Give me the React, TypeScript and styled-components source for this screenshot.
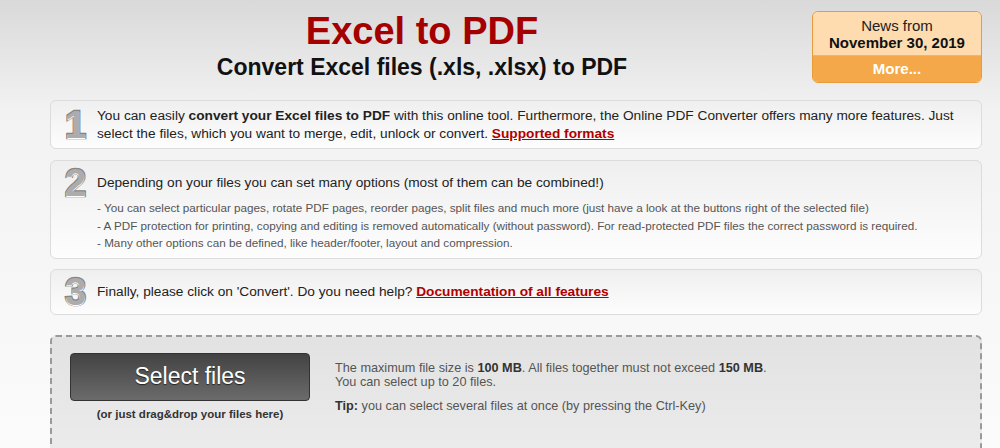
import styled, { createGlobalStyle } from "styled-components";

const GlobalStyle = createGlobalStyle`
  html, body {
    margin: 0;
    padding: 0;
  }
  body {
    font-family: "Liberation Sans", Arial, sans-serif;
    color: #222;
    background: linear-gradient(to bottom, #d9d9d9 0px, #f2f2f2 110px, #fbfbfb 448px);
    min-height: 448px;
    overflow: hidden;
  }
`;

const Page = styled.div`
  padding: 0 18px 0 50px;
`;

const Header = styled.header`
  display: flex;
  align-items: flex-start;
  gap: 18px;
  height: 100px;
  box-sizing: border-box;
  padding-top: 9px;
`;

const TitleBlock = styled.div`
  flex: 1;
  text-align: center;
`;

const Title = styled.h1`
  margin: 0;
  font-size: 38px;
  line-height: 44px;
  font-weight: bold;
  color: #a50000;
`;

const Subtitle = styled.h2`
  margin: 0;
  font-size: 23px;
  line-height: 28px;
  font-weight: bold;
  color: #111;
`;

const News = styled.div`
  width: 170px;
  margin-top: 2px;
  box-sizing: border-box;
  border: 1px solid #e99a3a;
  border-radius: 6px;
  overflow: hidden;
  text-align: center;
  font-size: 15px;
`;

const NewsTop = styled.div`
  background: #fedcb0;
  padding: 5px 0 4px;
  line-height: 17px;
  color: #222;
  b {
    color: #111;
  }
`;

const NewsMore = styled.div`
  background: #f4a84a;
  color: #fff;
  font-weight: bold;
  line-height: 26px;
  border-top: 1px solid #f0b370;
`;

const Step = styled.section<{ $gap?: number }>`
  display: flex;
  align-items: flex-start;
  padding: 6px 14px;
  margin-bottom: ${(p) => p.$gap ?? 10}px;
  border: 1px solid #dcdcdc;
  border-radius: 6px;
  background: linear-gradient(to bottom, #efefef, #fdfdfd);
`;

const Digit = styled.div<{ $center?: boolean }>`
  flex: 0 0 32px;
  height: 32px;
  align-self: ${(p) => (p.$center ? "center" : "flex-start")};
  font-family: "Liberation Sans", Arial, sans-serif;
  font-weight: bold;
  font-size: 38px;
  line-height: 32px;
  color: #acacac;
  -webkit-text-stroke: 2.5px #868686;
  paint-order: stroke fill;
  text-shadow: 0 1px 0 #fff;
`;

const StepBody = styled.div`
  flex: 1;
  font-size: 13.7px;
`;

const Para = styled.p<{ $single?: boolean }>`
  margin: 0;
  line-height: ${(p) => (p.$single ? "32px" : "17.5px")};
`;

const SubList = styled.div`
  font-size: 11.7px;
  line-height: 17.5px;
  color: #555;
`;

const Link = styled.a`
  color: #b00000;
  font-weight: bold;
  text-decoration: underline;
`;

const DropZone = styled.div`
  margin-top: 20px;
  display: flex;
  align-items: flex-start;
  gap: 25px;
  padding: 16px 18px 40px;
  border: 2px dashed #9a9a9a;
  border-radius: 6px;
  background: linear-gradient(to bottom, #e2e2e2, #ececec);
`;

const PickColumn = styled.div`
  width: 240px;
  text-align: center;
`;

const SelectButton = styled.button`
  width: 240px;
  height: 48px;
  border: 1px solid #333;
  border-radius: 4px;
  background: linear-gradient(to bottom, #434343, #6b6b6b);
  color: #fff;
  font-family: "Liberation Sans", Arial, sans-serif;
  font-size: 23px;
  text-shadow: 0 1px 1px #222;
  cursor: pointer;
`;

const DragHint = styled.div`
  margin-top: 7px;
  font-size: 11.5px;
  font-weight: bold;
  color: #333;
`;

const Limits = styled.div`
  margin-top: 8px;
  font-size: 12.7px;
  line-height: 14px;
  color: #555;
  b {
    color: #333;
  }
`;

const Tip = styled.p`
  margin: 10px 0 0;
`;

export default function App() {
  return (
    <>
      <GlobalStyle />
      <Page>
        <Header>
          <TitleBlock>
            <Title>Excel to PDF</Title>
            <Subtitle>Convert Excel files (.xls, .xlsx) to PDF</Subtitle>
          </TitleBlock>
          <News>
            <NewsTop>
              News from
              <br />
              <b>November 30, 2019</b>
            </NewsTop>
            <NewsMore>More...</NewsMore>
          </News>
        </Header>

        <Step $gap={11}>
          <Digit $center>1</Digit>
          <StepBody>
            <Para>
              You can easily <b>convert your Excel files to PDF</b> with this
              online tool. Furthermore, the Online PDF Converter offers many
              more features. Just select the files, which you want to merge,
              edit, unlock or convert. <Link href="#">Supported formats</Link>
            </Para>
          </StepBody>
        </Step>

        <Step>
          <Digit>2</Digit>
          <StepBody>
            <Para $single>
              Depending on your files you can set many options (most of them
              can be combined!)
            </Para>
            <SubList>
              - You can select particular pages, rotate PDF pages, reorder
              pages, split files and much more (just have a look at the buttons
              right of the selected file)
              <br />- A PDF protection for printing, copying and editing is
              removed automatically (without password). For read-protected PDF
              files the correct password is required.
              <br />- Many other options can be defined, like header/footer,
              layout and compression.
            </SubList>
          </StepBody>
        </Step>

        <Step $gap={0}>
          <Digit>3</Digit>
          <StepBody>
            <Para $single>
              Finally, please click on 'Convert'. Do you need help?{" "}
              <Link href="#">Documentation of all features</Link>
            </Para>
          </StepBody>
        </Step>

        <DropZone>
          <PickColumn>
            <SelectButton>Select files</SelectButton>
            <DragHint>(or just drag&amp;drop your files here)</DragHint>
          </PickColumn>
          <Limits>
            The maximum file size is <b>100 MB</b>. All files together must not
            exceed <b>150 MB</b>.
            <br />
            You can select up to 20 files.
            <Tip>
              <b>Tip:</b> you can select several files at once (by pressing the
              Ctrl-Key)
            </Tip>
          </Limits>
        </DropZone>
      </Page>
    </>
  );
}
